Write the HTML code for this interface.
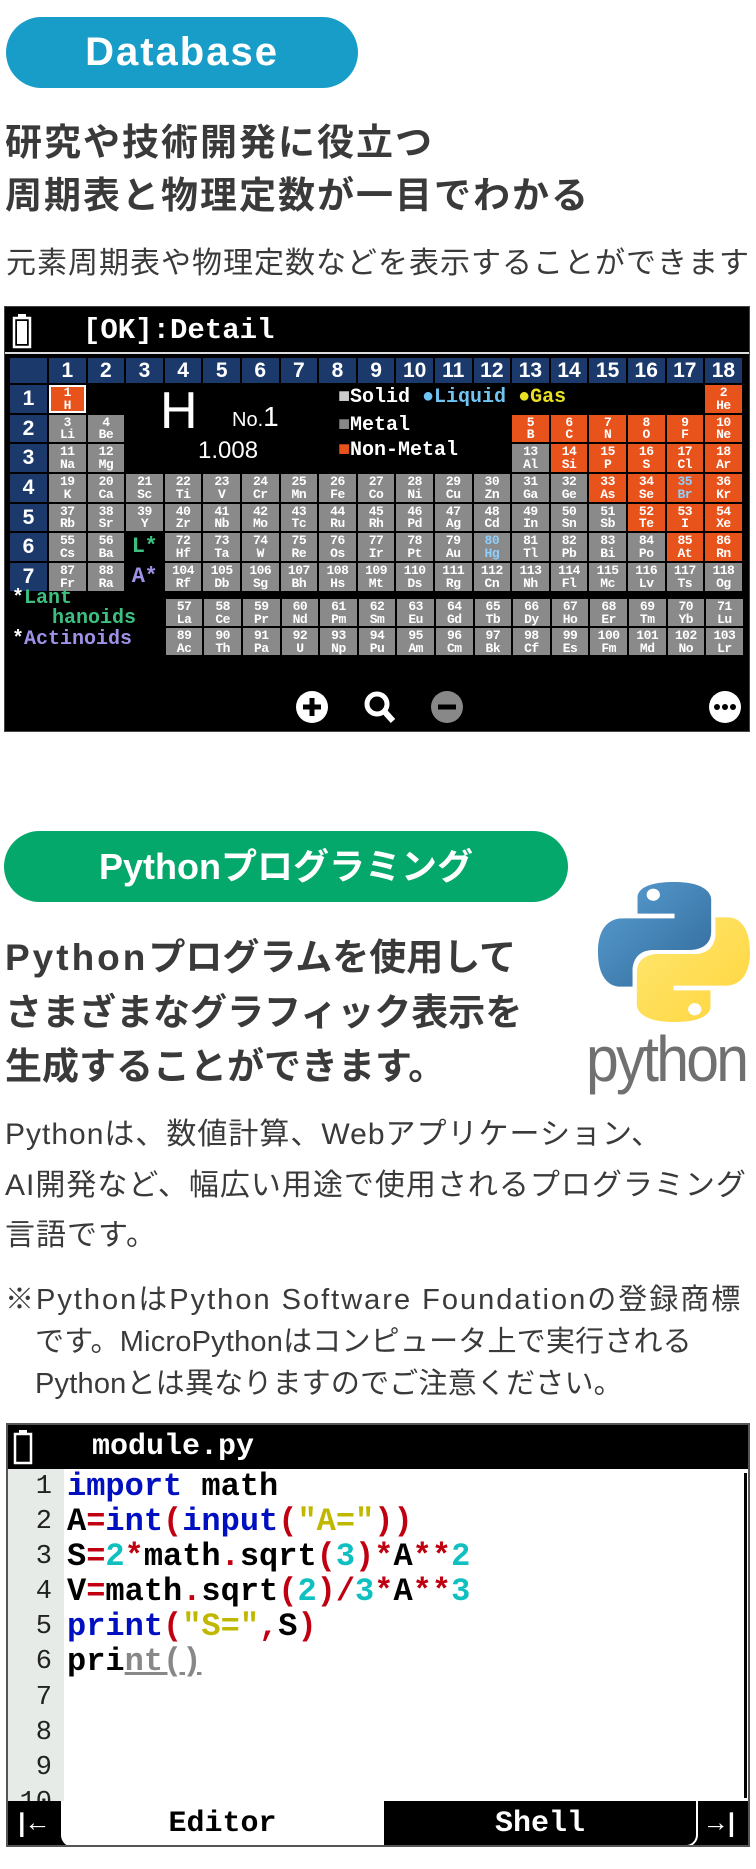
<!DOCTYPE html>
<html><head><meta charset="utf-8"><style>
*{margin:0;padding:0;box-sizing:border-box}
body{width:756px;height:1869px;overflow:hidden;background:#fff;position:relative;font-family:"Liberation Sans","Noto Sans CJK JP",sans-serif}
.a{position:absolute;white-space:nowrap}
.pill{border-radius:40px;color:#fff;text-align:center;font-weight:700}
.jp{font-family:"Liberation Sans","Noto Sans CJK JP",sans-serif;color:#3a3a3a}
.scr{position:absolute;background:#000;overflow:hidden}
.g{position:absolute;display:grid}
.g i{display:block;background:#8a8a8a;margin:1px;font:bold 13px/12.5px "Liberation Mono",monospace;color:#fff;text-align:center;padding-top:2px;font-style:normal;overflow:hidden;letter-spacing:-0.5px}
.g i.o{background:#e8531b}
.g i.e{background:none}
.g i.h{background:#1b3a6b;font:bold 21px/25px "Liberation Sans",sans-serif;padding:0;letter-spacing:0}
.g i.bl{color:#8fd0ff}
.mono{font-family:"Liberation Mono",monospace;font-weight:bold}
.code{position:absolute;left:67px;top:1469px;font:bold 32px/35.1px "Liberation Mono",monospace;color:#000;white-space:pre}
.k{color:#0010c0}.r{color:#c00010}.y{color:#c0b800}.c{color:#10c0c0}
</style></head><body>

<div class="a pill" style="left:6px;top:17px;width:352px;height:71px;background:#189dc8;font-size:40px;line-height:71px;letter-spacing:2px">Database</div>
<div class="a jp" style="left:5px;top:116px;font-size:37px;line-height:53px;font-weight:700;letter-spacing:2px">研究や技術開発に役立つ<br>周期表と物理定数が一目でわかる</div>
<div class="a jp" style="left:6px;top:246px;font-size:30px;line-height:36px;letter-spacing:1px">元素周期表や物理定数などを表示することができます</div>

<div class="scr" style="left:4px;top:306px;width:746px;height:426px;border:1px solid #444">
  <svg style="position:absolute;left:6px;top:6px" width="22" height="36"><rect x="3" y="5" width="16" height="29" fill="none" stroke="#fff" stroke-width="2.5"/><rect x="7" y="1" width="8" height="4" fill="#fff"/><rect x="6" y="8" width="10" height="23" fill="#fff"/></svg>
  <div class="a mono" style="left:78px;top:6px;font-size:29px;line-height:36px;color:#fff">[OK]:Detail</div>
  <div class="a" style="left:0;top:45px;width:746px;height:2px;background:#ddd"></div>
</div>

<div class="g" style="left:9px;top:357px;grid-template-columns:39px repeat(18,38.6px);grid-template-rows:27px repeat(7,29.7px)">
<i class="h"></i><i class="h">1</i><i class="h">2</i><i class="h">3</i><i class="h">4</i><i class="h">5</i><i class="h">6</i><i class="h">7</i><i class="h">8</i><i class="h">9</i><i class="h">10</i><i class="h">11</i><i class="h">12</i><i class="h">13</i><i class="h">14</i><i class="h">15</i><i class="h">16</i><i class="h">17</i><i class="h">18</i>
<i class="h" style="line-height:28px">1</i><i class="o" style="border:2px solid #fff;padding-top:0">1<br>H</i><i class="e"></i><i class="e"></i><i class="e"></i><i class="e"></i><i class="e"></i><i class="e"></i><i class="e"></i><i class="e"></i><i class="e"></i><i class="e"></i><i class="e"></i><i class="e"></i><i class="e"></i><i class="e"></i><i class="e"></i><i class="e"></i><i class="o">2<br>He</i>
<i class="h" style="line-height:28px">2</i><i>3<br>Li</i><i>4<br>Be</i><i class="e"></i><i class="e"></i><i class="e"></i><i class="e"></i><i class="e"></i><i class="e"></i><i class="e"></i><i class="e"></i><i class="e"></i><i class="e"></i><i class="o">5<br>B</i><i class="o">6<br>C</i><i class="o">7<br>N</i><i class="o">8<br>O</i><i class="o">9<br>F</i><i class="o">10<br>Ne</i>
<i class="h" style="line-height:28px">3</i><i>11<br>Na</i><i>12<br>Mg</i><i class="e"></i><i class="e"></i><i class="e"></i><i class="e"></i><i class="e"></i><i class="e"></i><i class="e"></i><i class="e"></i><i class="e"></i><i class="e"></i><i>13<br>Al</i><i class="o">14<br>Si</i><i class="o">15<br>P</i><i class="o">16<br>S</i><i class="o">17<br>Cl</i><i class="o">18<br>Ar</i>
<i class="h" style="line-height:28px">4</i><i>19<br>K</i><i>20<br>Ca</i><i>21<br>Sc</i><i>22<br>Ti</i><i>23<br>V</i><i>24<br>Cr</i><i>25<br>Mn</i><i>26<br>Fe</i><i>27<br>Co</i><i>28<br>Ni</i><i>29<br>Cu</i><i>30<br>Zn</i><i>31<br>Ga</i><i>32<br>Ge</i><i class="o">33<br>As</i><i class="o">34<br>Se</i><i class="o bl">35<br>Br</i><i class="o">36<br>Kr</i>
<i class="h" style="line-height:28px">5</i><i>37<br>Rb</i><i>38<br>Sr</i><i>39<br>Y</i><i>40<br>Zr</i><i>41<br>Nb</i><i>42<br>Mo</i><i>43<br>Tc</i><i>44<br>Ru</i><i>45<br>Rh</i><i>46<br>Pd</i><i>47<br>Ag</i><i>48<br>Cd</i><i>49<br>In</i><i>50<br>Sn</i><i>51<br>Sb</i><i class="o">52<br>Te</i><i class="o">53<br>I</i><i class="o">54<br>Xe</i>
<i class="h" style="line-height:28px">6</i><i>55<br>Cs</i><i>56<br>Ba</i><i class="e" style="color:#3cc080;font-size:22px;line-height:24px">L*</i><i>72<br>Hf</i><i>73<br>Ta</i><i>74<br>W</i><i>75<br>Re</i><i>76<br>Os</i><i>77<br>Ir</i><i>78<br>Pt</i><i>79<br>Au</i><i class="bl">80<br>Hg</i><i>81<br>Tl</i><i>82<br>Pb</i><i>83<br>Bi</i><i>84<br>Po</i><i class="o">85<br>At</i><i class="o">86<br>Rn</i>
<i class="h" style="line-height:28px">7</i><i>87<br>Fr</i><i>88<br>Ra</i><i class="e" style="color:#a090e8;font-size:22px;line-height:24px">A*</i><i>104<br>Rf</i><i>105<br>Db</i><i>106<br>Sg</i><i>107<br>Bh</i><i>108<br>Hs</i><i>109<br>Mt</i><i>110<br>Ds</i><i>111<br>Rg</i><i>112<br>Cn</i><i>113<br>Nh</i><i>114<br>Fl</i><i>115<br>Mc</i><i>116<br>Lv</i><i>117<br>Ts</i><i>118<br>Og</i>
</div>

<div class="g" style="left:164.8px;top:598px;grid-template-columns:repeat(15,38.6px);grid-template-rows:repeat(2,29px)">
<i>57<br>La</i><i>58<br>Ce</i><i>59<br>Pr</i><i>60<br>Nd</i><i>61<br>Pm</i><i>62<br>Sm</i><i>63<br>Eu</i><i>64<br>Gd</i><i>65<br>Tb</i><i>66<br>Dy</i><i>67<br>Ho</i><i>68<br>Er</i><i>69<br>Tm</i><i>70<br>Yb</i><i>71<br>Lu</i>
<i>89<br>Ac</i><i>90<br>Th</i><i>91<br>Pa</i><i>92<br>U</i><i>93<br>Np</i><i>94<br>Pu</i><i>95<br>Am</i><i>96<br>Cm</i><i>97<br>Bk</i><i>98<br>Cf</i><i>99<br>Es</i><i>100<br>Fm</i><i>101<br>Md</i><i>102<br>No</i><i>103<br>Lr</i>
</div>

<div class="a" style="left:160px;top:383px;font-size:52px;line-height:56px;color:#fff">H</div>
<div class="a" style="left:232px;top:403px;font-size:20px;line-height:28px;color:#fff">No.<span style="font-size:28px">1</span></div>
<div class="a" style="left:198px;top:437px;font-size:24px;line-height:28px;color:#fff">1.008</div>
<div class="a mono" style="left:338px;top:386px;font-size:20px;line-height:24px;color:#fff"><span style="color:#ccc">■</span>Solid <span style="color:#70c4f4">●Liquid</span> <span style="color:#e8e020">●Gas</span></div>
<div class="a mono" style="left:338px;top:414px;font-size:20px;line-height:24px;color:#fff"><span style="color:#888">■</span>Metal</div>
<div class="a mono" style="left:338px;top:439px;font-size:20px;line-height:24px;color:#fff"><span style="color:#e8531b">■</span>Non-Metal</div>
<div class="a mono" style="left:12px;top:589px;font-size:20px;line-height:20px;color:#3cc080"><span style="color:#fff">*</span>Lant<br><span style="padding-left:40px">hanoids</span></div>
<div class="a mono" style="left:12px;top:629px;font-size:20px;line-height:22px;color:#a090e8"><span style="color:#fff">*</span>Actinoids</div>

<svg class="a" style="left:290px;top:689px" width="460" height="38">
 <circle cx="22" cy="18" r="16" fill="#fff"/><path d="M22 9v18M13 18h18" stroke="#000" stroke-width="5"/>
 <circle cx="87" cy="15" r="10" fill="none" stroke="#fff" stroke-width="5"/><path d="M94 22l9 10" stroke="#fff" stroke-width="6"/>
 <circle cx="157" cy="18" r="16" fill="#888"/><path d="M148 18h18" stroke="#000" stroke-width="5"/>
 <circle cx="435" cy="18" r="16" fill="#fff"/><circle cx="427" cy="18" r="3" fill="#000"/><circle cx="435" cy="18" r="3" fill="#000"/><circle cx="443" cy="18" r="3" fill="#000"/>
</svg>

<div class="a pill" style="left:4px;top:831px;width:564px;height:71px;background:#03a86a;font-size:36px;line-height:71px">Pythonプログラミング</div>
<div class="a jp" style="left:5px;top:931px;font-size:37px;line-height:54.5px;font-weight:700"><span style="letter-spacing:3px">Python</span>プログラムを使用して<br>さまざまなグラフィック表示を<br>生成することができます。</div>

<svg class="a" style="left:598px;top:882px" width="152" height="140" viewBox="0 0 110 110" preserveAspectRatio="none">
 <defs><linearGradient id="b" x1="0" y1="0" x2="1" y2="1"><stop offset="0" stop-color="#5a9fd4"/><stop offset="1" stop-color="#306998"/></linearGradient>
 <linearGradient id="yl" x1="0" y1="0" x2="1" y2="1"><stop offset="0" stop-color="#ffe873"/><stop offset="1" stop-color="#ffd43b"/></linearGradient></defs>
 <path fill="url(#b)" d="M54.9,0C26.8,0 28.6,12.2 28.6,12.2L28.6,24.8H55.4V28.6H17.9C17.9,28.6 0,26.6 0,54.9C0,83.2 15.6,82.2 15.6,82.2H25V69C25,69 24.5,53.4 40.4,53.4H67C67,53.4 81.9,53.6 81.9,39V14.8C81.9,14.8 84.2,0 54.9,0Z"/>
 <circle cx="40" cy="10" r="4.8" fill="#fff"/>
 <path fill="url(#yl)" d="M55.1,110C83.2,110 81.4,97.8 81.4,97.8V85.2H54.6V81.4H92.1C92.1,81.4 110,83.4 110,55.1C110,26.8 94.4,27.8 94.4,27.8H85V41C85,41 85.5,56.6 69.6,56.6H43C43,56.6 28.1,56.4 28.1,71V95.2C28.1,95.2 25.8,110 55.1,110Z"/>
 <circle cx="70" cy="100" r="4.8" fill="#fff"/>
</svg>
<div class="a" style="left:586px;top:1022px;font-size:64px;line-height:74px;color:#707070;letter-spacing:-3px;transform:scaleX(0.92);transform-origin:left">python</div>

<div class="a jp" style="left:5px;top:1110px;font-size:30px;line-height:50.5px;letter-spacing:1px">Pythonは、数値計算、Webアプリケーション、<br>AI開発など、幅広い用途で使用されるプログラミング<br>言語です。</div>
<div class="a jp" style="left:5px;top:1279px;font-size:29px;line-height:42px"><span style="letter-spacing:2px">※PythonはPython Software Foundationの登録商標</span><br><span style="padding-left:30px;letter-spacing:0.2px">です。MicroPythonはコンピュータ上で実行される</span><br><span style="padding-left:30px;letter-spacing:0.2px">Pythonとは異なりますのでご注意ください。</span></div>

<div class="scr" style="left:6px;top:1423px;width:744px;height:424px;background:#fff;border:2px solid #555">
 <div class="a" style="left:0;top:0;width:744px;height:44px;background:#000"></div>
 <svg style="position:absolute;left:4px;top:4px" width="22" height="36"><rect x="3" y="5" width="16" height="29" fill="none" stroke="#fff" stroke-width="2.5"/><rect x="7" y="1" width="8" height="4" fill="#fff"/></svg>
 <div class="a mono" style="left:84px;top:4px;font-size:30px;line-height:36px;color:#fff">module.py</div>
 <div class="a" style="left:0;top:44px;width:56px;height:333px;background:#e6ebe8"></div>
 <div class="a" style="left:0;top:45px;width:44px;font:27px/35.1px 'Liberation Mono',monospace;color:#222;text-align:right;white-space:pre">1
2
3
4
5
6
7
8
9
10</div>
 <div class="a" style="left:736px;top:48px;width:3px;height:325px;background:#000"></div>
 <div class="a" style="left:0;top:376px;width:744px;height:46px;background:#000"></div>
 <div class="a" style="left:53px;top:376px;width:323px;height:46px;background:#fff;border-radius:0 0 0 12px;text-align:center;font:bold 30px/46px 'Liberation Mono',monospace;color:#000">Editor</div>
 <div class="a" style="left:376px;top:376px;width:314px;height:46px;border-right:2px solid #fff;border-bottom:2px solid #fff;border-radius:0 0 12px 0;text-align:center;font:bold 30px/46px 'Liberation Mono',monospace;color:#fff">Shell</div>
 <div class="a" style="left:6px;top:376px;font:bold 26px/46px 'Liberation Mono',monospace;color:#fff">|←</div>
 <div class="a" style="left:700px;top:376px;font:bold 26px/46px 'Liberation Mono',monospace;color:#fff">→|</div>
</div>
<div class="code"><span class="k">import</span> math
A<span class="r">=</span><span class="k">int</span><span class="r">(</span><span class="k">input</span><span class="r">(</span><span class="y">"A="</span><span class="r">))</span>
S<span class="r">=</span><span class="c">2</span><span class="r">*</span>math<span class="r">.</span>sqrt<span class="r">(</span><span class="c">3</span><span class="r">)*</span>A<span class="r">**</span><span class="c">2</span>
V<span class="r">=</span>math<span class="r">.</span>sqrt<span class="r">(</span><span class="c">2</span><span class="r">)/</span><span class="c">3</span><span class="r">*</span>A<span class="r">**</span><span class="c">3</span>
<span class="k">print</span><span class="r">(</span><span class="y">"S="</span><span class="r">,</span>S<span class="r">)</span>
pri<span style="color:#888;text-decoration:underline">nt()</span></div>

</body></html>
